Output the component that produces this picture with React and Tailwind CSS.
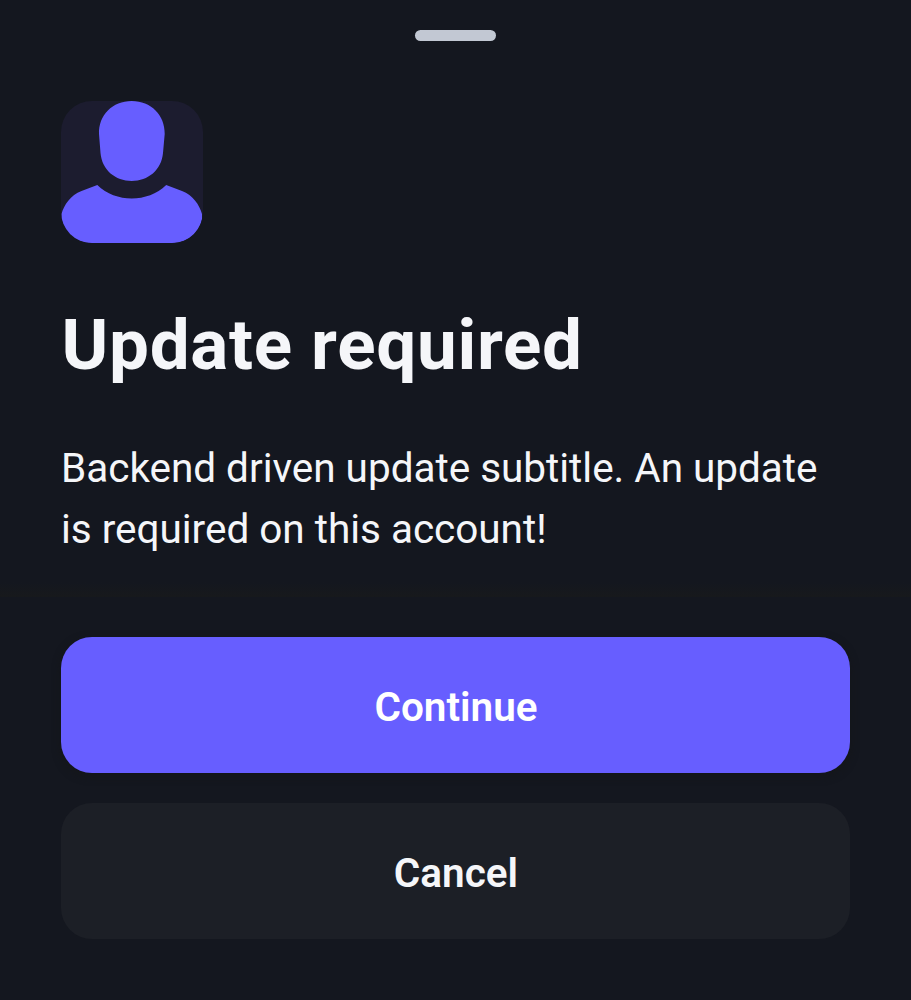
export default function App() {
  return (
    <main className="flex h-[1000px] w-[911px] flex-col overflow-hidden bg-[#14171f] font-['Roboto',sans-serif] text-[#f5f6f9]">
      <div className="mx-auto mt-[30px] h-[11px] w-[81px] shrink-0 rounded-full bg-[#c2c8d3]" />
      <section className="flex h-[541px] shrink-0 flex-col px-[61px] pt-[60px]">
        <div className="h-[142px] w-[141.500px] shrink-0 overflow-hidden rounded-[31px] bg-[#1c1c2f]">
          <svg viewBox="0 0 141.5 142" className="size-full" fill="#675eff" aria-hidden="true">
            <path d="M70.700 0C90 0 104 14 103.700 33L102 52C100.500 69 87 80 70.700 80S41 69 39.500 52L38 33C37.500 14 51.500 0 70.700 0Z" />
            <path d="M36.300 84C55 102 86.500 102 105.200 84L121 90C132 94 138.500 104 141 113V118C138 132 127 142 111 142H30.500C14.500 142 3.500 132 0.500 118V113C3 104 9.500 94 20.500 90Z" />
          </svg>
        </div>
        <h1 className="mt-[55px] pl-[0.500px] text-[71px] leading-[93px] font-bold tracking-[0.700px] whitespace-nowrap">Update required</h1>
        <p className="mt-[47px] text-[40.500px] leading-[61px] tracking-[-0.025px] whitespace-nowrap">
          Backend driven update subtitle. An update<br />is required on this account!
        </p>
      </section>
      <div className="h-[15px] shrink-0 bg-linear-to-b from-[#14171f] to-[#17191c]" />
      <footer className="flex flex-1 flex-col gap-[30px] px-[61px] pt-[40px]">
        <button className="h-[136px] rounded-[31px] bg-[#675eff] pt-[4px] pl-px text-[40.500px] font-semibold text-white shadow-[0_3px_9px_#141619]">Continue</button>
        <button className="h-[136px] rounded-[31px] bg-[#1c1f26] pt-[4px] pl-px text-[40.500px] font-semibold">Cancel</button>
      </footer>
    </main>
  );
}
